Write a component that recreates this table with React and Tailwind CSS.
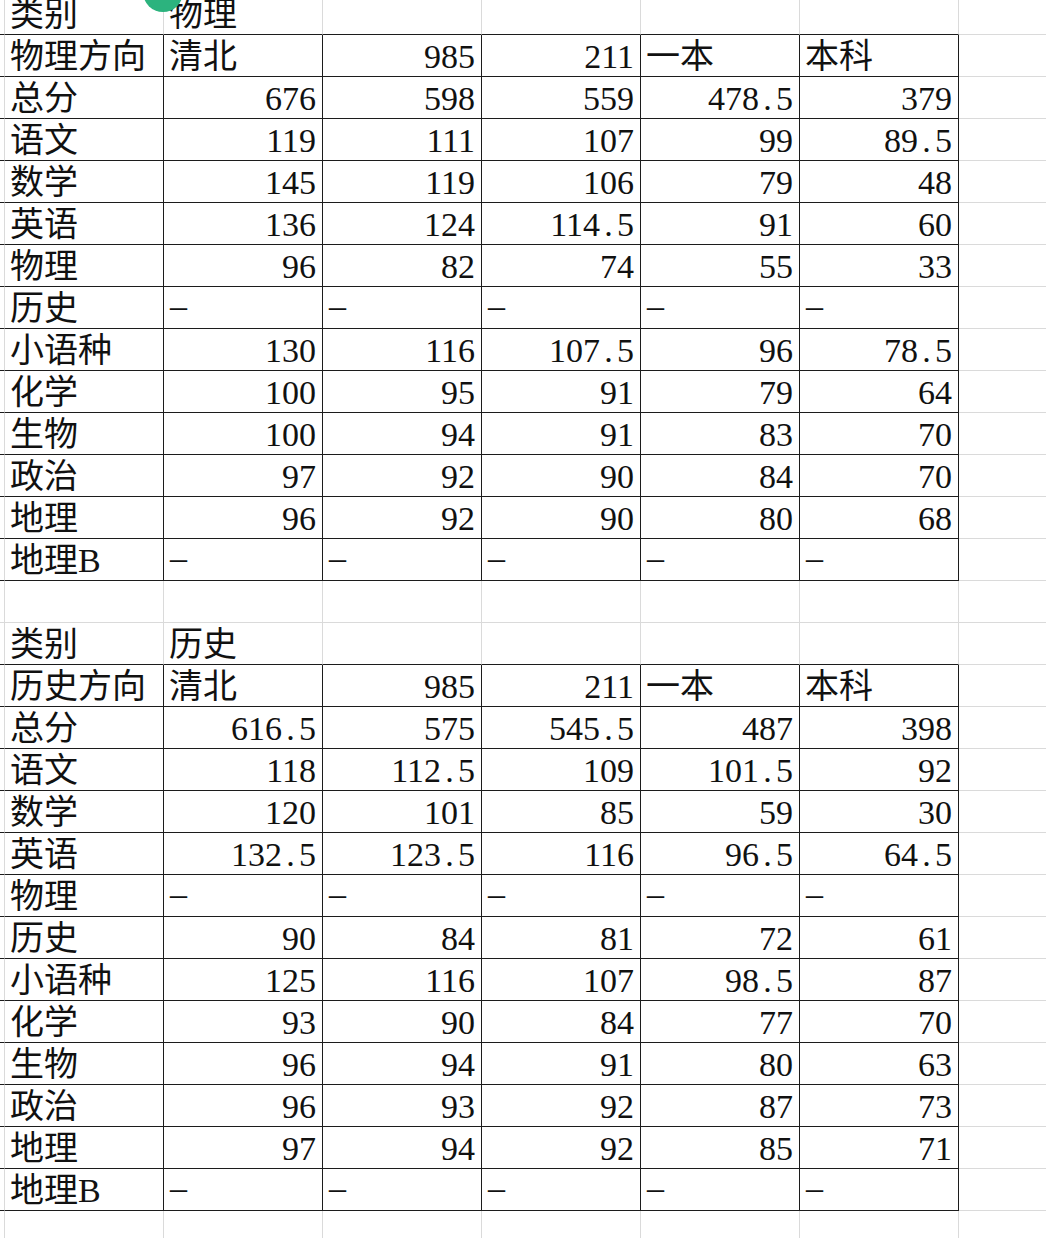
import React from "react";

const t1 = {
  cat: "物理",
  head: "物理方向",
  rows: [
    ["总分", "676", "598", "559", "478.5", "379"],
    ["语文", "119", "111", "107", "99", "89.5"],
    ["数学", "145", "119", "106", "79", "48"],
    ["英语", "136", "124", "114.5", "91", "60"],
    ["物理", "96", "82", "74", "55", "33"],
    ["历史", "-", "-", "-", "-", "-"],
    ["小语种", "130", "116", "107.5", "96", "78.5"],
    ["化学", "100", "95", "91", "79", "64"],
    ["生物", "100", "94", "91", "83", "70"],
    ["政治", "97", "92", "90", "84", "70"],
    ["地理", "96", "92", "90", "80", "68"],
    ["地理B", "-", "-", "-", "-", "-"],
  ],
};

const t2 = {
  cat: "历史",
  head: "历史方向",
  rows: [
    ["总分", "616.5", "575", "545.5", "487", "398"],
    ["语文", "118", "112.5", "109", "101.5", "92"],
    ["数学", "120", "101", "85", "59", "30"],
    ["英语", "132.5", "123.5", "116", "96.5", "64.5"],
    ["物理", "-", "-", "-", "-", "-"],
    ["历史", "90", "84", "81", "72", "61"],
    ["小语种", "125", "116", "107", "98.5", "87"],
    ["化学", "93", "90", "84", "77", "70"],
    ["生物", "96", "94", "91", "80", "63"],
    ["政治", "96", "93", "92", "87", "73"],
    ["地理", "97", "94", "92", "85", "71"],
    ["地理B", "-", "-", "-", "-", "-"],
  ],
};

function Num({ v }) {
  const parts = v.split(".");
  if (parts.length === 1) return <span>{v}</span>;
  return (
    <span>
      {parts[0]}
      <span className="inline-block w-[0.5em] text-center">.</span>
      {parts[1]}
    </span>
  );
}

// kind: "text" | "num" | "dash" | "empty"
function Cell({ kind, value, dark, darkBottom, last }) {
  const base = "h-[42px] shrink-0 border-b pt-[2px] leading-[39px] whitespace-nowrap overflow-hidden";
  const right = last ? "" : dark ? "border-r border-r-[#1c1c1c]" : "border-r border-r-[#dadada]";
  const bottom = darkBottom ? "border-b-[#1c1c1c]" : "border-b-[#dadada]";
  const width = last ? "flex-1" : "w-[159px]";
  let content = null;
  let align = "pl-[5px]";
  if (kind === "num") {
    align = "text-right pr-[6px]";
    content = <Num v={value} />;
  } else if (kind === "dash") {
    content = <span className="inline-block pl-[1px] -translate-y-[3px]">–</span>;
  } else if (kind === "text") {
    content = value;
  }
  return <div className={`${base} ${right} ${bottom} ${width} ${align}`}>{content}</div>;
}

function Spacer({ darkBottom }) {
  return (
    <div
      className={`h-[42px] w-[5px] shrink-0 border-b border-r border-r-[#dadada] ${
        darkBottom ? "border-b-[#1c1c1c]" : "border-b-[#dadada]"
      }`}
    />
  );
}

function Row({ cells, inTable, topOfTable }) {
  const darkB = inTable || topOfTable;
  return (
    <div className="flex">
      <Spacer darkBottom={darkB} />
      {cells.map((c, i) => (
        <Cell key={i} kind={c[0]} value={c[1]} dark={inTable} darkBottom={darkB} />
      ))}
      <Cell kind="empty" last darkBottom={false} />
    </div>
  );
}

function classify(v) {
  if (v === "-") return ["dash", v];
  if (/^[0-9.]+$/.test(v)) return ["num", v];
  return ["text", v];
}

function Table({ data }) {
  const empty = [["empty"], ["empty"], ["empty"], ["empty"]];
  return (
    <>
      <Row cells={[["text", "类别"], ["text", data.cat], ...empty]} topOfTable />
      <Row
        cells={[
          ["text", data.head],
          ["text", "清北"],
          ["num", "985"],
          ["num", "211"],
          ["text", "一本"],
          ["text", "本科"],
        ]}
        inTable
      />
      {data.rows.map((r, i) => (
        <Row key={i} cells={r.map((v, j) => (j === 0 ? ["text", v] : classify(v)))} inTable />
      ))}
    </>
  );
}

export default function App() {
  const empty6 = [["empty"], ["empty"], ["empty"], ["empty"], ["empty"], ["empty"]];
  return (
    <div className="relative h-[1238px] w-[1046px] overflow-hidden bg-white font-['Liberation_Serif','DejaVu_Serif','Noto_Sans_CJK_SC',serif] text-[34px] text-[#111]">
      <div className="mt-[-7px]">
        <Table data={t1} />
        <Row cells={empty6} />
        <Table data={t2} />
        <Row cells={empty6} />
      </div>
      <div className="absolute left-[143px] top-[-28px] h-[40px] w-[40px] rounded-full bg-[#2cb37e]" />
    </div>
  );
}
